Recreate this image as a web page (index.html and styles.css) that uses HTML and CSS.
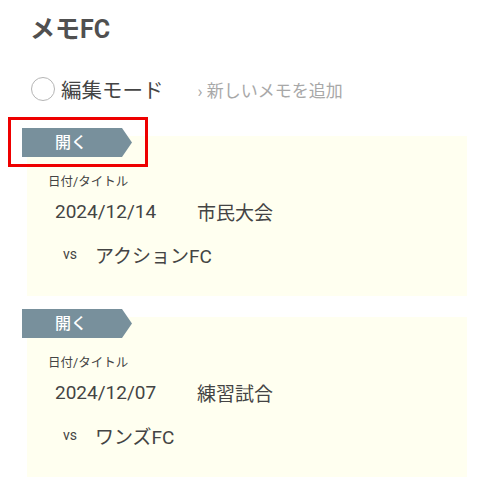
FILE: index.html
```html
<!DOCTYPE html>
<html lang="ja">
<head>
<meta charset="utf-8">
<title>メモFC</title>
<link rel="stylesheet" href="styles.css">
</head>
<body>
<div class="page">
  <h1 class="title">メモFC</h1>
  <div class="toolbar">
    <label class="mode">
      <span class="radio"></span>
      <span class="mode-text">編集モード</span>
    </label>
    <a class="add-link">› 新しいメモを追加</a>
  </div>

  <div class="memo">
    <div class="tag">開く</div>
    <div class="highlight"></div>
    <div class="card">
      <div class="label">日付/タイトル</div>
      <div class="row-main">
        <span class="date">2024/12/14</span>
        <span class="name">市民大会</span>
      </div>
      <div class="row-vs">
        <span class="vs">vs</span>
        <span class="opponent">アクションFC</span>
      </div>
    </div>
  </div>

  <div class="memo">
    <div class="tag">開く</div>
    <div class="card">
      <div class="label">日付/タイトル</div>
      <div class="row-main">
        <span class="date">2024/12/07</span>
        <span class="name">練習試合</span>
      </div>
      <div class="row-vs">
        <span class="vs">vs</span>
        <span class="opponent">ワンズFC</span>
      </div>
    </div>
  </div>
</div>
</body>
</html>
```

FILE: styles.css
```css
html, body {
  margin: 0;
  padding: 0;
  background: #ffffff;
}
body {
  font-family: Roboto, "Noto Sans CJK JP", sans-serif;
  color: #444444;
}
.page {
  padding: 14px 27px 0 27px;
  width: 440px;
}
.title {
  margin: 0 0 0 3px;
  font-size: 25px;
  line-height: 32px;
  font-weight: 700;
  color: #505050;
}
.toolbar {
  display: flex;
  align-items: center;
  margin-top: 28px;
  padding-left: 4px;
  height: 30px;
}
.mode {
  display: flex;
  align-items: center;
  gap: 6px;
}
.radio {
  width: 22px;
  height: 22px;
  border: 1.5px solid #b5b5b5;
  border-radius: 50%;
  box-sizing: content-box;
}
.mode-text {
  font-size: 20.5px;
  color: #444444;
}
.add-link {
  margin-left: 34px;
  font-size: 17px;
  color: #a8a8a8;
}
.memo {
  position: relative;
  margin-top: 24px;
}
.memo + .memo {
  margin-top: 13px;
}
.tag {
  position: relative;
  z-index: 2;
  margin-left: -5px;
  width: 110px;
  height: 29px;
  background: #78909c;
  color: #ffffff;
  font-size: 16px;
  line-height: 29px;
  font-weight: 500;
  box-sizing: border-box;
  text-align: center;
  text-indent: -12px;
  clip-path: polygon(0 0, 100px 0, 110px 50%, 100px 100%, 0 100%);
}
.highlight {
  position: absolute;
  z-index: 3;
  left: -19px;
  top: -11px;
  width: 134px;
  height: 44px;
  border: 3px solid #ee0000;
}
.card {
  margin-top: -21px;
  background: #fffff0;
  padding: 38px 21px 28px 21px;
}
.label {
  font-size: 12.5px;
  line-height: 16px;
  color: #444444;
}
.row-main {
  display: flex;
  align-items: center;
  margin-top: 7px;
  padding-left: 7px;
  height: 29px;
  font-size: 19px;
}
.date {
  width: 142px;
}
.row-vs {
  display: flex;
  align-items: center;
  margin-top: 14px;
  padding-left: 15px;
  height: 28px;
}
.vs {
  font-size: 14px;
  width: 32px;
}
.opponent {
  font-size: 19px;
}
```
